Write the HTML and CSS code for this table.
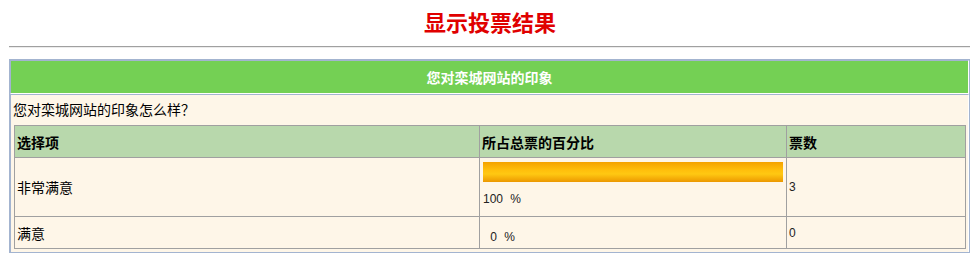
FILE: index.html
```html
<!DOCTYPE html>
<html lang="zh-CN">
<head>
<meta charset="utf-8">
<title>显示投票结果</title>
<link rel="stylesheet" href="styles.css">
</head>
<body>
  <h1 class="title">显示投票结果</h1>
  <div class="rule"></div>
  <div class="box">
    <div class="box-head">您对栾城网站的印象</div>
    <div class="box-body">
      <div class="question">您对栾城网站的印象怎么样？</div>
      <table class="results">
        <thead>
          <tr class="row-head">
            <th class="c1">选择项</th>
            <th class="c2">所占总票的百分比</th>
            <th class="c3">票数</th>
          </tr>
        </thead>
        <tbody>
          <tr>
            <td class="c1">非常满意</td>
            <td class="c2 pct-cell">
              <div class="bar" style="width:300px"></div>
              <div class="pct">100 %</div>
            </td>
            <td class="c3 num">3</td>
          </tr>
          <tr class="row-short">
            <td class="c1">满意</td>
            <td class="c2 pct-zero"><span class="pct">&nbsp;0 %</span></td>
            <td class="c3 num">0</td>
          </tr>
        </tbody>
      </table>
    </div>
  </div>
</body>
</html>
```

FILE: styles.css
```css
html, body {
  margin: 0;
  padding: 0;
  background: #ffffff;
}
body {
  font-family: "Noto Sans CJK SC", "Liberation Sans", sans-serif;
  font-size: 14px;
  color: #000;
}
.title {
  margin: 0;
  padding-top: 8px;
  font-size: 22px;
  line-height: 26px;
  font-weight: 700;
  color: #e00000;
  text-align: center;
}
.rule {
  margin: 12px 10px 0 9px;
  border-top: 1px solid #a0a0a0;
  border-bottom: 1px solid #ececec;
}
.box {
  margin: 11px 10px 0 9px;
  border: 1px solid #a3b4d0;
  background: #ffffff;
  display: flex;
  flex-direction: column;
}
.box-head {
  height: 32px;
  line-height: 32px;
  background: #74d054;
  color: #ffffff;
  font-weight: 700;
  text-align: center;
  border-top: 1px solid #a3b4d0;
  border-left: 1px solid #a3b4d0;
  border-right: 1px solid #ffffff;
  border-bottom: 1px solid #ffffff;
}
.box-body {
  background: #fef6e8;
  border-top: 1px solid #a3b4d0;
  border-left: 1px solid #a3b4d0;
  border-right: 1px solid #ffffff;
  padding: 0 0 3px 0;
}
.question {
  padding-left: 2px;
  line-height: 28px;
  height: 28px;
}
.results {
  margin: 2px 0 0 3px;
  width: 952px;
  border-collapse: collapse;
  table-layout: fixed;
  border: 1px solid #a0a0a0;
}
.results th,
.results td {
  border: 1px solid #a0a0a0;
  padding: 0 2px;
  vertical-align: middle;
  text-align: left;
}
.results th {
  background: #b8d8ac;
  font-weight: 700;
}
.row-head {
  height: 32px;
}
.results .c1 { width: 460px; }
.results .c2 { width: 302px; }
.pct-cell {
  vertical-align: top !important;
  padding: 4px 2px 9px 2px !important;
}
.bar {
  height: 20px;
  margin-left: 1px;
  background: linear-gradient(to bottom, #f4a200 0%, #ffbf0c 40%, #ffc812 60%, #ec9800 100%);
}
.pct {
  margin-top: 9px;
  margin-left: 1px;
  font-family: "Liberation Sans", sans-serif;
  font-size: 12px;
  line-height: 16px;
  word-spacing: 4px;
  color: #222;
}
.pct-zero .pct {
  display: inline-block;
  margin: 8px 0 0 1px;
}
.num {
  font-family: "Liberation Sans", sans-serif;
  font-size: 12px;
  color: #222;
}
.row-short {
  height: 32px;
}
```
